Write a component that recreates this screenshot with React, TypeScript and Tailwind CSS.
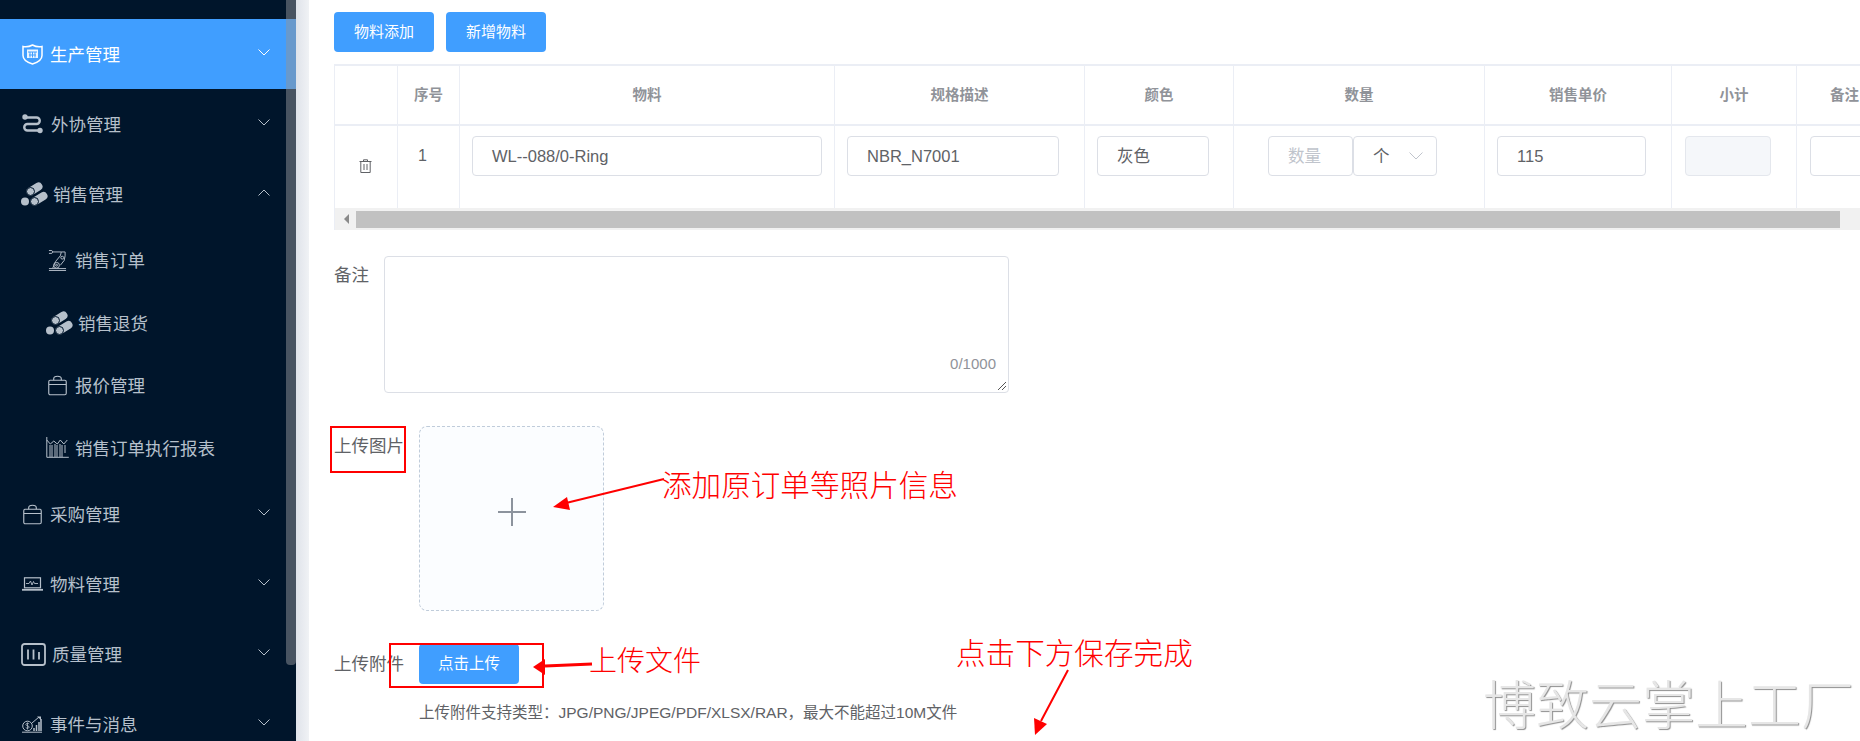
import type { ReactNode } from "react";

const FONT = "font-['Liberation_Sans','Noto_Sans_CJK_SC',sans-serif]";

function ShieldIcon() {
  return (
    <svg viewBox="0 0 21 21" className="h-[21px] w-[21px]" fill="none" stroke="currentColor">
      <path d="M1 2.5c3 .6 6 .4 9.5-1.5 3.5 1.900 6.5 2.100 9.500 1.500v9c0 4.500-4.500 7-9.500 8.500C5.500 18.500 1 16 1 11.500z" strokeWidth="1.5" />
      <path d="M5 5.500h11v8.500H5z" fill="currentColor" stroke="none" opacity=".9" />
      <path d="M6 8h9M8 8v5.500M10.500 8v5.500M13 8v5.500M7 11h7" stroke="#409eff" strokeWidth="1" />
    </svg>
  );
}

function RouteIcon() {
  return (
    <svg viewBox="0 0 21 20" className="h-[20px] w-[21px]" fill="none" stroke="currentColor">
      <circle cx="3" cy="3" r="2.7" fill="currentColor" stroke="none" />
      <circle cx="18" cy="16.5" r="2.7" fill="currentColor" stroke="none" />
      <path d="M4 3.500h10.500a3.200 3.200 0 0 1 0 6.500h-9a3.200 3.200 0 0 0 0 6.500H16" strokeWidth="2.4" />
    </svg>
  );
}

function PipesIcon() {
  return (
    <svg viewBox="0 0 27 24" className="h-[24px] w-[27px]" fill="currentColor" stroke="none">
      <path d="M9.500 9.500 17.500 4.500" stroke="currentColor" strokeWidth="8" strokeLinecap="round" />
      <path d="M13.500 19.500 22.500 14" stroke="currentColor" strokeWidth="8" strokeLinecap="round" />
      <circle cx="9.5" cy="9.5" r="4" stroke="#00152b" strokeWidth="1" />
      <circle cx="4" cy="19.5" r="4" />
      <circle cx="13.5" cy="19.5" r="4" stroke="#00152b" strokeWidth="1" />
    </svg>
  );
}

function RobotIcon() {
  return (
    <svg viewBox="0 0 20 24" className="h-[23px] w-[19px]" fill="none" stroke="currentColor" strokeWidth="1">
      <path d="M1 22.500h18M1 20.500h18" />
      <circle cx="9" cy="17" r="3" />
      <circle cx="9" cy="17" r="1" />
      <circle cx="15" cy="9" r="1.5" />
      <path d="M5 20l3-7 5-6 1-4h4v4l-1 5-4 5" />
      <path d="M1 1.500h3l1 1.500h9M1 4.500h3l1-1.500" />
    </svg>
  );
}

function BagIcon() {
  return (
    <svg viewBox="0 0 20 21" className="h-[21px] w-[19px]" fill="none" stroke="currentColor" strokeWidth="1.2">
      <rect x=".8" y="5" width="18.4" height="15.2" rx="1.5" />
      <path d="M1 9.500h18M6 5V3.500C6 1.800 7.500.8 10 .8s4 1 4 2.700V5" />
    </svg>
  );
}

function ChartIcon() {
  return (
    <svg viewBox="0 0 23 21" className="h-[21px] w-[23px]" fill="none" stroke="currentColor" strokeWidth="1">
      <path d="M.8 0v20.300h22" />
      <path d="M.8 3l3.500 4 3.500-3 3.500 3 3-4 3.500 4 3.500-4" />
      <path d="M4 8v12M6 8v12M9 7v13M11 8v12M14 7v13M16 8v12M19 8v8" />
    </svg>
  );
}

function LaptopIcon() {
  return (
    <svg viewBox="0 0 21 14" className="h-[14px] w-[21px]" fill="none" stroke="currentColor" strokeWidth="1.2">
      <rect x="2.5" y=".8" width="16" height="10" />
      <path d="M0 12.800h21" strokeWidth="1.8" />
      <path d="M4 6.500h3l1.500-2.500 1.500 4 1.500-3.500 1 2h3.500" strokeWidth=".9" />
    </svg>
  );
}

function BarsIcon() {
  return (
    <svg viewBox="0 0 25 23" className="h-[23px] w-[25px]" fill="none" stroke="currentColor">
      <rect x="1" y="1" width="23" height="21" rx="2.5" strokeWidth="1.8" />
      <path d="M7 6.500v10M12.500 6.500v10M18 9v7.500" strokeWidth="1.8" />
    </svg>
  );
}

function MoneyChartIcon() {
  return (
    <svg viewBox="0 0 20 17" className="h-[17px] w-[20px]" fill="none" stroke="currentColor" strokeWidth="1">
      <circle cx="5.5" cy="10" r="4.8" />
      <path d="M7.200 8c-.5-1-3.200-1-3.400.4-.2 1.600 3.500 1 3.400 2.800-.1 1.300-3 1.300-3.500.2M5.500 6.500v7" strokeWidth=".8" />
      <path d="M0 16.200h20" />
      <path d="M12 15v-3M14.500 15V9M17 15V6M19 15V3" strokeWidth="1.5" />
      <path d="M10 7l7-6" />
      <path d="M15 .5h4v3.500z" fill="currentColor" stroke="none" />
    </svg>
  );
}

function Chevron({ up = false }: { up?: boolean }) {
  return (
    <svg viewBox="0 0 12 7" className="mb-[4px] ml-auto h-[7px] w-[12px]" fill="none" stroke="currentColor" strokeWidth="1">
      <path d={up ? "M.5 6.500 6 1l5.500 5.500" : "M.5.500 6 6 11.500.500"} />
    </svg>
  );
}

function NavGroup({ icon, label, pad, gap, active = false, up = false }: { icon: ReactNode; label: string; pad: string; gap: string; active?: boolean; up?: boolean }) {
  return (
    <div className={`flex h-[70px] items-center pr-[26px] text-[17.5px] ${pad} ${active ? "bg-[#409eff] text-white" : "text-[#b6c0cb]"}`}>
      <span className={`flex shrink-0 items-center ${gap}`}>{icon}</span>
      <span className="mt-[2px]">{label}</span>
      <Chevron up={up} />
    </div>
  );
}

function NavSub({ icon, label, pad, gap }: { icon: ReactNode; label: string; pad: string; gap: string }) {
  return (
    <div className={`flex h-[62.5px] items-center text-[17.5px] text-[#b6c0cb] ${pad}`}>
      <span className={`flex shrink-0 items-center ${gap}`}>{icon}</span>
      <span className="mt-[2px]">{label}</span>
    </div>
  );
}

function Sidebar() {
  return (
    <aside className="relative h-full w-[296px] shrink-0 overflow-hidden bg-[#00152b] pt-[19px]">
      <NavGroup icon={<ShieldIcon />} label="生产管理" pad="pl-[22px]" gap="mr-[7px]" active />
      <NavGroup icon={<RouteIcon />} label="外协管理" pad="pl-[22px]" gap="mr-[8px]" />
      <NavGroup icon={<PipesIcon />} label="销售管理" pad="pl-[21px]" gap="mr-[5px]" up />
      <NavSub icon={<RobotIcon />} label="销售订单" pad="pl-[48px]" gap="mr-[8px]" />
      <NavSub icon={<PipesIcon />} label="销售退货" pad="pl-[46px]" gap="mr-[5px]" />
      <NavSub icon={<BagIcon />} label="报价管理" pad="pl-[48px]" gap="mr-[8px]" />
      <NavSub icon={<ChartIcon />} label="销售订单执行报表" pad="pl-[46px]" gap="mr-[6px]" />
      <NavGroup icon={<BagIcon />} label="采购管理" pad="pl-[23px]" gap="mr-[8px]" />
      <NavGroup icon={<LaptopIcon />} label="物料管理" pad="pl-[22px]" gap="mr-[7px]" />
      <NavGroup icon={<BarsIcon />} label="质量管理" pad="pl-[21px]" gap="mr-[6px]" />
      <NavGroup icon={<MoneyChartIcon />} label="事件与消息" pad="pl-[22px]" gap="mr-[8px]" />
      {/* overlay scrollbar */}
      <div className="absolute top-0 right-0 h-[665px] w-[10px] rounded-b-[4px] bg-[#90939980]" />
    </aside>
  );
}

function Th({ w, children }: { w: string; children?: ReactNode }) {
  return (
    <div className={`flex h-full shrink-0 items-center justify-center border-r border-[#ebeef5] pt-[1px] text-[14.5px] font-bold text-[#909399] ${w}`}>
      {children}
    </div>
  );
}

function Td({ w, pad, children }: { w: string; pad: string; children?: ReactNode }) {
  return <div className={`flex h-full shrink-0 items-start border-r border-[#ebeef5] pt-[10px] ${w} ${pad}`}>{children}</div>;
}

function Field({ w, text, tone = "" }: { w: string; text?: string; tone?: string }) {
  return (
    <div className={`flex h-[40px] shrink-0 items-center rounded-[4px] border border-[#dcdfe6] pl-[19px] text-[16.5px] text-[#606266] ${w} ${tone}`}>
      {text}
    </div>
  );
}

function ItemTable() {
  return (
    <div className="mt-[12px] w-[1700px] border-t-2 border-l border-[#ebeef5]">
      <div className="flex h-[60px] border-b-2 border-[#ebeef5]">
        <Th w="w-[63px]" />
        <Th w="w-[62px]">序号</Th>
        <Th w="w-[375px]">物料</Th>
        <Th w="w-[250px]">规格描述</Th>
        <Th w="w-[149px]">颜色</Th>
        <Th w="w-[251px]">数量</Th>
        <Th w="w-[187px]">销售单价</Th>
        <Th w="w-[125px]">小计</Th>
        <Th w="w-[96px]">备注</Th>
      </div>
      <div className="flex h-[82px]">
        <div className="flex h-full w-[63px] shrink-0 justify-center border-r border-[#ebeef5] pt-[33px] pr-[2px]">
          <svg viewBox="0 0 13 14" className="h-[14px] w-[13px]" fill="none" stroke="#606266" strokeWidth="1">
            <path d="M.5 2.500h12M4.500 2.500V.8h4v1.700M1.800 2.500v11h9.400v-11M5 5v6M8 5v6" />
          </svg>
        </div>
        <Td w="w-[62px]" pad="justify-center pr-[12px]">
          <span className="mt-[8px] text-[16px] text-[#606266]">1</span>
        </Td>
        <Td w="w-[375px]" pad="pl-[12px]">
          <Field w="w-[350px]" text="WL--088/0-Ring" />
        </Td>
        <Td w="w-[250px]" pad="pl-[12px]">
          <Field w="w-[212px]" text="NBR_N7001" />
        </Td>
        <Td w="w-[149px]" pad="pl-[12px]">
          <Field w="w-[112px]" text="灰色" />
        </Td>
        <Td w="w-[251px]" pad="pl-[34px]">
          <Field w="w-[85px]" text="数量" tone="text-[#c0c4cc]" />
          <div className="flex h-[40px] w-[84px] items-center justify-between rounded-[4px] border border-[#dcdfe6] pr-[13px] pl-[19px] text-[16.5px] text-[#606266]">
            个
            <svg viewBox="0 0 14 8" className="h-[8px] w-[14px]" fill="none" stroke="#c0c4cc" strokeWidth="1">
              <path d="M.5.500 7 7l6.500-6.500" />
            </svg>
          </div>
        </Td>
        <Td w="w-[187px]" pad="pl-[12px]">
          <Field w="w-[149px]" text="115" />
        </Td>
        <Td w="w-[125px]" pad="pl-[13px]">
          <Field w="w-[86px]" tone="bg-[#f5f7fa] border-[#e4e7ed]" />
        </Td>
        <Td w="w-[125px]" pad="pl-[13px]">
          <Field w="w-[90px]" />
        </Td>
      </div>
      <div className="flex h-[22px] w-[1526px] items-center bg-[#f1f1f1] pl-[9px]">
        <span className="h-0 w-0 border-y-[5px] border-r-[5px] border-y-transparent border-r-[#8a8a8a]" />
        <div className="ml-[7px] h-[17px] w-[1484px] bg-[#c1c1c1]" />
      </div>
    </div>
  );
}

function Form() {
  return (
    <div className="flex flex-col pt-[12px] text-[#606266]">
      <div className="flex gap-[12px]">
        <button className="h-[40px] w-[100px] rounded-[4px] bg-[#409eff] text-[15px] text-white">物料添加</button>
        <button className="h-[40px] w-[100px] rounded-[4px] bg-[#409eff] text-[15px] text-white">新增物料</button>
      </div>
      <ItemTable />
      <div className="mt-[26px] flex">
        <label className="w-[50px] pt-[6px] text-[17.5px]">备注</label>
        <div className="relative h-[137px] w-[625px] rounded-[4px] border border-[#dcdfe6]">
          <span className="absolute right-[12px] bottom-[17px] text-[15px] text-[#909399]">0/1000</span>
          <svg viewBox="0 0 10 10" className="absolute right-[1px] bottom-[1px] h-[10px] w-[10px]" stroke="#555" strokeWidth="1">
            <path d="M1 9 9 1M5 9l4-4" />
          </svg>
        </div>
      </div>
      <div className="mt-[33px] flex">
        <label className="w-[85px] pt-[7px] text-[17.5px]">上传图片</label>
        <div className="flex h-[185px] w-[185px] items-center justify-center rounded-[8px] border border-dashed border-[#c0ccda] bg-[#fbfdff] pb-[14px]">
          <svg viewBox="0 0 28 28" className="h-[28px] w-[28px]" stroke="#8c939d" strokeWidth="2">
            <path d="M0 14h28M14 0v28" />
          </svg>
        </div>
      </div>
      <div className="mt-[33px] flex items-center">
        <label className="w-[85px] text-[17.5px]">上传附件</label>
        <button className="h-[40px] w-[100px] rounded-[4px] bg-[#409eff] text-[15.5px] text-white">点击上传</button>
      </div>
      <p className="mt-[20px] pl-[85px] text-[15.5px] leading-[18px] whitespace-nowrap">上传附件支持类型：JPG/PNG/JPEG/PDF/XLSX/RAR，最大不能超过10M文件</p>
    </div>
  );
}

function Annotations() {
  return (
    <>
      <div className="absolute top-[426px] left-[330px] h-[47px] w-[76px] border-2 border-[#ff0000]" />
      <div className="absolute top-[643px] left-[389px] h-[45px] w-[155px] border-2 border-[#ff0000]" />
      <span className="absolute top-[466px] left-[662px] text-[29.6px] leading-[40px] font-light whitespace-nowrap text-[#ff0000]">添加原订单等照片信息</span>
      <span className="absolute top-[642px] left-[589px] text-[28px] leading-[40px] font-light whitespace-nowrap text-[#ff0000]">上传文件</span>
      <span className="absolute top-[634px] left-[956px] text-[29.6px] leading-[40px] font-light whitespace-nowrap text-[#ff0000]">点击下方保存完成</span>
      <svg viewBox="0 0 1860 741" className="pointer-events-none absolute top-0 left-0 h-[741px] w-[1860px]">
        <path d="M664 479 566 503" stroke="#ff0000" strokeWidth="2" />
        <path d="M553 507 567 497 570 510z" fill="#ff0000" />
        <path d="M592 664 545 666" stroke="#ff0000" strokeWidth="3" />
        <path d="M533 667 545 659 545 675z" fill="#ff0000" />
        <path d="M1068 670 1041 721" stroke="#ff0000" strokeWidth="2" />
        <path d="M1035 735 1034 718 1047 724z" fill="#ff0000" />
      </svg>
      <span className="absolute top-[670px] left-[1483px] text-[53px] leading-[74px] font-light whitespace-nowrap text-[#e6e6e6] [text-shadow:1px_1px_1px_#8f8f8f]">博致云掌上工厂</span>
    </>
  );
}

export default function App() {
  return (
    <div className={`relative flex h-[741px] w-[1860px] overflow-hidden bg-white ${FONT}`}>
      <Sidebar />
      <div className="h-full w-[13px] shrink-0 bg-gradient-to-r from-[#dfe3ea] to-[#f0f2f5]" />
      <main className="min-w-0 flex-1 overflow-hidden pl-[25px]">
        <Form />
      </main>
      <Annotations />
    </div>
  );
}
